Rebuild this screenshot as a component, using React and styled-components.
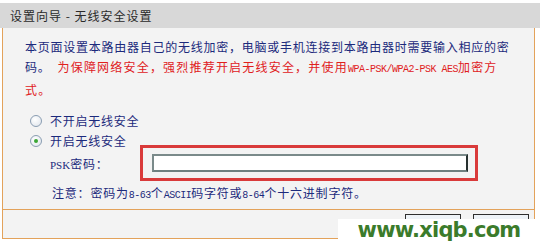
import React from "react";
import styled, { createGlobalStyle } from "styled-components";

const Global = createGlobalStyle`
  html, body { margin: 0; padding: 0; background: #ffffff; }
  body { width: 540px; height: 242px; overflow: hidden; font-family: "Noto Sans CJK SC", sans-serif; }
`;

const Frame = styled.div`
  width: 540px;
  height: 242px;
  position: relative;
  background: #ffffff;
  overflow: hidden;
`;

const TitleBar = styled.div`
  margin-top: 3px;
  height: 25px;
  background: #d8d8d8;
  display: flex;
  align-items: center;
  padding-left: 10px;
  font-size: 12px;
  letter-spacing: 1px;
  color: #2a2a2a;
  white-space: pre;
`;

const Panel = styled.div`
  margin: 0 5px 0 2px;
  border-left: 1px solid #e3a25a;
  border-right: 1px solid #e3a25a;
  border-bottom: 1px solid #e3a25a;
  background: #f3f3f3;
  display: flex;
  flex-direction: column;
`;

const Body = styled.div`
  padding: 9px 14px 0 22px;
  height: 172px;
  border-bottom: 1px solid #e3a25a;
  display: flex;
  flex-direction: column;
`;

const Para = styled.p`
  margin: 0;
  font-size: 12px;
  line-height: 20px;
  color: #1c2a7c;
  letter-spacing: 0.75px;
  white-space: nowrap;
`;

const Warn = styled.span`
  color: #e0201c;
  margin-left: 7px;
  letter-spacing: 1.2px;
`;

const Mono = styled.span`
  font-family: "Liberation Mono", monospace;
  font-size: 10px;
  letter-spacing: -0.5px;
`;

const Options = styled.div`
  margin-top: 12px;
  padding-left: 5px;
  display: flex;
  flex-direction: column;
  gap: 3px;
`;

const RadioRow = styled.label`
  display: flex;
  align-items: center;
  gap: 8px;
  height: 17px;
  font-size: 12px;
  letter-spacing: 0.75px;
  color: #1c2a7c;
`;

const Radio = styled.span`
  box-sizing: border-box;
  width: 12px;
  height: 12px;
  border-radius: 50%;
  border: 1px solid #8a9db2;
  background: radial-gradient(circle at 40% 35%, #ffffff 0%, #dde3ea 100%);
  display: flex;
  align-items: center;
  justify-content: center;
  &::after {
    content: "";
    width: 4px;
    height: 4px;
    border-radius: 50%;
    background: ${(p) => (p.$checked ? "#3aa635" : "transparent")};
  }
`;

const PskRow = styled.div`
  display: flex;
  align-items: center;
  margin-left: 25px;
  margin-top: -4px;
`;

const PskLabel = styled.span`
  width: 90px;
  font-size: 12px;
  letter-spacing: 0.75px;
  color: #1c2a7c;
  & > b {
    font-weight: normal;
    font-family: "Liberation Serif", serif;
    font-size: 11px;
    letter-spacing: 0;
  }
`;

const Highlight = styled.div`
  box-sizing: border-box;
  width: 338px;
  height: 36px;
  border: 3px solid #d93a3a;
  padding: 6px 7px 6px 9px;
`;

const Input = styled.div`
  box-sizing: border-box;
  height: 18px;
  background: #ffffff;
  border: 2px solid #7a8a8a;
  border-right-color: #26302f;
  border-bottom-color: #6f8080;
`;

const Note = styled.div`
  margin-top: 4px;
  margin-left: 27px;
  font-size: 12px;
  line-height: 16px;
  letter-spacing: 0.8px;
  color: #1c2a7c;
`;

const Footer = styled.div`
  height: 28px;
  display: flex;
  justify-content: flex-end;
  align-items: flex-start;
  gap: 12px;
  padding: 4px 5px 0 0;
  box-sizing: border-box;
`;

const Btn = styled.div`
  box-sizing: border-box;
  width: 56px;
  height: 22px;
  border: 1px solid #2e2e2e;
  background: #eef3f8;
  font-size: 12px;
  line-height: 20px;
  text-align: center;
  color: #222;
  letter-spacing: 2px;
`;

const Watermark = styled.div`
  position: absolute;
  left: 338px;
  top: 219px;
  width: 202px;
  height: 23px;
  background: #ffffff;
  display: flex;
  align-items: center;
  justify-content: center;
  font-family: "DejaVu Sans", sans-serif;
  font-weight: bold;
  font-size: 21px;
  line-height: 23px;
  color: #3b7b2b;
  letter-spacing: -0.8px;
`;

export default function App() {
  return (
    <Frame>
      <Global />
      <TitleBar>设置向导 - 无线安全设置</TitleBar>
      <Panel>
        <Body>
          <Para>
            本页面设置本路由器自己的无线加密，电脑或手机连接到本路由器时需要输入相应的密
            <br />
            码。
            <Warn>
              为保障网络安全，强烈推荐开启无线安全，并使用<Mono>WPA-PSK/WPA2-PSK AES</Mono>加密方
              <br />
              式。
            </Warn>
          </Para>
          <Options>
            <RadioRow>
              <Radio />
              不开启无线安全
            </RadioRow>
            <RadioRow>
              <Radio $checked />
              开启无线安全
            </RadioRow>
          </Options>
          <PskRow>
            <PskLabel>
              <b>PSK</b>密码：
            </PskLabel>
            <Highlight>
              <Input />
            </Highlight>
          </PskRow>
          <Note>
            注意：密码为<Mono>8-63</Mono>个<Mono>ASCII</Mono>码字符或<Mono>8-64</Mono>个十六进制字符。
          </Note>
        </Body>
        <Footer>
          <Btn>上一步</Btn>
          <Btn>下一步</Btn>
        </Footer>
      </Panel>
      <Watermark>www.xiqb.com</Watermark>
    </Frame>
  );
}
